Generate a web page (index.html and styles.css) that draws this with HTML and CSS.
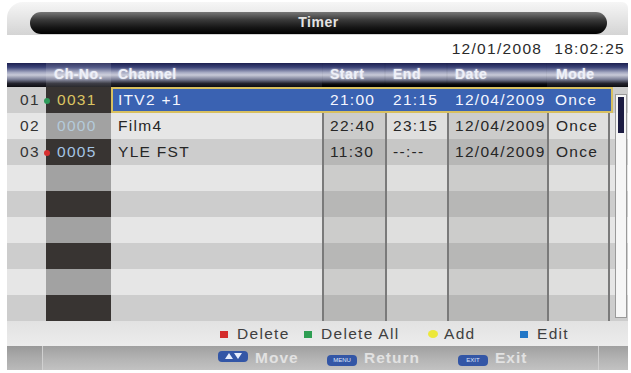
FILE: index.html
```html
<!DOCTYPE html>
<html>
<head>
	<title>Timer</title>
	<link rel="stylesheet" href="styles.css">
</head>
<body>
	<div class="screen">
		<div class="titlebar"><div class="pill">Timer</div></div>
		<div class="clock"><span>12/01/2008</span><span>18:02:25</span></div>
		<div class="list">
			<div class="thead">
				<div></div>
				<div class="h-chno">Ch-No.</div>
				<div class="h-chan">Channel</div>
				<div class="h-time">Start</div>
				<div class="h-time">End</div>
				<div class="h-time">Date</div>
				<div class="h-mode">Mode</div>
				<div></div>
			</div>

			<div class="row odd">
				<div class="idx">01<span class="dot green"></span></div>
				<div class="chno yellow">0031</div>
				<div class="sel">
					<div class="chan">ITV2 +1</div>
					<div class="t">21:00</div>
					<div class="t">21:15</div>
					<div class="t">12/04/2009</div>
					<div class="t">Once</div>
					<div></div>
				</div>
			</div>
			<div class="row even">
				<div class="idx">02</div>
				<div class="chno faint">0000</div>
				<div class="chan">Film4</div>
				<div class="col dark">22:40</div>
				<div class="col light">23:15</div>
				<div class="col dark">12/04/2009</div>
				<div class="col light last">Once</div>
				<div></div>
			</div>
			<div class="row odd">
				<div class="idx">03<span class="dot red"></span></div>
				<div class="chno blue">0005</div>
				<div class="chan">YLE FST</div>
				<div class="col dark">11:30</div>
				<div class="col light">--:--</div>
				<div class="col dark">12/04/2009</div>
				<div class="col light last">Once</div>
				<div></div>
			</div>
			<div class="row even">
				<div class="idx"></div><div class="chno"></div><div class="chan"></div>
				<div class="col dark"></div><div class="col light"></div><div class="col dark"></div><div class="col light last"></div><div></div>
			</div>
			<div class="row odd">
				<div class="idx"></div><div class="chno"></div><div class="chan"></div>
				<div class="col dark"></div><div class="col light"></div><div class="col dark"></div><div class="col light last"></div><div></div>
			</div>
			<div class="row even">
				<div class="idx"></div><div class="chno"></div><div class="chan"></div>
				<div class="col dark"></div><div class="col light"></div><div class="col dark"></div><div class="col light last"></div><div></div>
			</div>
			<div class="row odd">
				<div class="idx"></div><div class="chno"></div><div class="chan"></div>
				<div class="col dark"></div><div class="col light"></div><div class="col dark"></div><div class="col light last"></div><div></div>
			</div>
			<div class="row even">
				<div class="idx"></div><div class="chno"></div><div class="chan"></div>
				<div class="col dark"></div><div class="col light"></div><div class="col dark"></div><div class="col light last"></div><div></div>
			</div>
			<div class="row odd">
				<div class="idx"></div><div class="chno"></div><div class="chan"></div>
				<div class="col dark"></div><div class="col light"></div><div class="col dark"></div><div class="col light last"></div><div></div>
			</div>

			<div class="scroll"><div class="thumb"></div></div>
		</div>

		<div class="legend">
			<div><span class="key k-red"></span>Delete</div>
			<div><span class="key k-green"></span>Delete All</div>
			<div><span class="key k-yellow"></span>Add</div>
			<div><span class="key k-blue"></span>Edit</div>
		</div>

		<div class="bottombar">
			<div class="edge-l"></div>
			<div class="keys">
				<div><span class="btn"><svg width="22" height="8" viewBox="0 0 22 8"><path d="M3 7 L7 1 L11 7 Z" fill="#e8eefc"/><path d="M12 1 L20 1 L16 7 Z" fill="#e8eefc"/></svg></span>Move</div>
				<div><span class="btn">MENU</span>Return</div>
				<div><span class="btn">EXIT</span>Exit</div>
			</div>
			<div class="edge-r"></div>
		</div>
	</div>
</body>
</html>
```

FILE: styles.css
```css
body {
	margin: 0;
	background-color: #fff;
	font-family: "Liberation Sans", Arial, sans-serif;
}
.screen {
	width: 621px;
	margin-left: 7px;
	padding-top: 2px;
}

/* title */
.titlebar {
	height: 33px;
	padding: 10px 21px 0 23px;
	box-sizing: border-box;
	background: linear-gradient(to bottom, #f6f6f6, #d4d4d4);
	border-radius: 16px 6px 0 0;
}
.pill {
	height: 22px;
	line-height: 21px;
	border-radius: 11px;
	background: linear-gradient(to bottom, #777 0%, #3a3a3a 35%, #161616 70%, #000 100%);
	color: #e4e4e4;
	font-size: 14px;
	font-weight: bold;
	text-align: center;
	letter-spacing: 0.5px;
}

.clock {
	height: 28px;
	display: flex;
	justify-content: flex-end;
	align-items: center;
	gap: 12px;
	padding-right: 3px;
	font-size: 15.5px;
	letter-spacing: 1.3px;
	color: #2a2a2a;
}

/* list */
.list {
	position: relative;
}
.thead, .row {
	display: grid;
	grid-template-columns: 39px 65px 211px 63px 62px 100px 63px 18px;
}
.thead {
	height: 24px;
	line-height: 22px;
	background: linear-gradient(to bottom, #1c2050 0%, #3c4478 18%, #a8acc4 40%, #c8cad8 50%, #7c8098 68%, #24242e 85%, #0c0c10 100%);
	color: #eef0f8;
	font-size: 14px;
	font-weight: bold;
	letter-spacing: 0.5px;
	text-shadow: 0 0 2px rgba(255,255,255,0.6);
}
.h-chno {
	text-align: center;
	background: rgba(255,255,255,0.12);
}
.h-chan {
	padding-left: 7px;
}
.h-time {
	padding-left: 8px;
	box-shadow: inset 0 -5px 3px -2px #000;
}
.h-mode {
	padding-left: 9px;
}

.row {
	height: 26px;
	line-height: 26px;
	font-size: 15.5px;
	letter-spacing: 1.3px;
	color: #262626;
}
.row.odd {
	background-color: #cdcdcd;
}
.row.even {
	background-color: #e6e6e6;
}
.idx {
	position: relative;
	padding-left: 13px;
	color: #333;
}
.dot {
	position: absolute;
	right: -4px;
	top: 11px;
	width: 6px;
	height: 6px;
	border-radius: 50%;
}
.dot.green {
	background-color: #2e9a5a;
}
.dot.red {
	background-color: #d83030;
}
.odd .chno {
	background-color: #383432;
}
.even .chno {
	background-color: #a2a2a2;
}
.chno {
	padding-left: 11px;
}
.chno.yellow {
	color: #dcc462;
}
.chno.blue {
	color: #a4c4e4;
}
.chno.faint {
	color: #b4cada;
}
.chan {
	padding-left: 7px;
}
.col {
	padding-left: 6px;
	border-left: 2px solid #7a7a7a;
}
.col.dark {
	background-color: rgba(70,66,64,0.16);
}
.col.light {
	background-color: rgba(120,120,100,0.06);
}
.col.last {
	border-right: 2px solid #7a7a7a;
	padding-left: 7px;
}

.sel {
	grid-column: 3 / 9;
	margin-right: 15px;
	display: grid;
	grid-template-columns: 211px 63px 62px 100px 63px 3px;
	background-color: #3a62b2;
	outline: 2px solid #d8c060;
	outline-offset: -2px;
	color: #f4f6ff;
}
.sel .t {
	padding-left: 8px;
}

.scroll {
	position: absolute;
	left: 608px;
	top: 31px;
	width: 10px;
	height: 222px;
	background-color: #f6f6f6;
	border: 1px solid #9a9a9a;
}
.thumb {
	width: 6px;
	height: 36px;
	margin: 2px auto 0;
	background-color: #1c1c42;
}

/* legend */
.legend {
	height: 25px;
	display: grid;
	grid-template-columns: 84px 124px 92px auto;
	align-items: center;
	padding-left: 213px;
	background: linear-gradient(to bottom, #e2e2e2, #ececec);
	font-size: 15.5px;
	letter-spacing: 1.3px;
	color: #404040;
}
.key {
	display: inline-block;
	width: 8px;
	height: 7px;
	margin-right: 9px;
	vertical-align: 1px;
}
.k-red {
	background-color: #d42c2c;
}
.k-green {
	background-color: #2e9e52;
}
.k-yellow {
	background-color: #ece83a;
	border-radius: 50%;
	width: 10px;
	height: 8px;
	margin-right: 6px;
}
.k-blue {
	background-color: #2276c6;
}

/* bottom bar */
.bottombar {
	height: 24px;
	display: flex;
	background: linear-gradient(to bottom, #a0a0a0, #b6b6b6 60%, #c2c2c2);
}
.edge-l {
	width: 35px;
	border-right: 1px solid #d0d0d0;
	background: rgba(0,0,0,0.04);
}
.edge-r {
	width: 29px;
	border-left: 1px solid #d0d0d0;
}
.keys {
	flex: 1;
	display: grid;
	grid-template-columns: 109px 131px auto;
	align-items: center;
	padding-left: 175px;
	font-size: 15.5px;
	font-weight: bold;
	letter-spacing: 1px;
	color: #e2e2e2;
}
.btn {
	display: inline-block;
	width: 30px;
	height: 11px;
	line-height: 11px;
	margin-right: 7px;
	border-radius: 4px;
	background-color: #3356a6;
	color: #dde6fa;
	font-size: 6px;
	font-weight: normal;
	letter-spacing: 0;
	text-align: center;
	vertical-align: 1px;
}
.btn svg {
	display: block;
	margin: 1px auto 0;
}
```
